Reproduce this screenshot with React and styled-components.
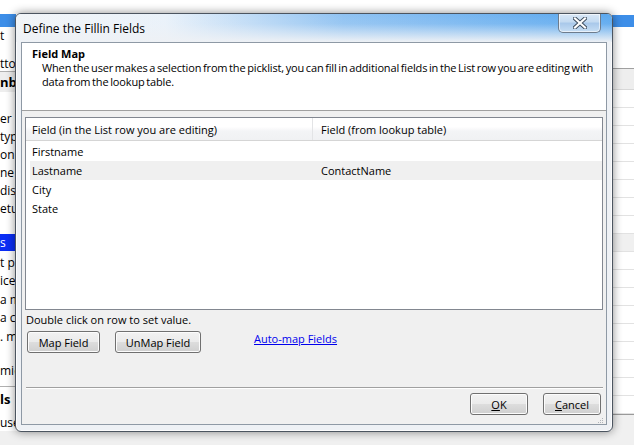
import styled, { createGlobalStyle } from 'styled-components';

const GlobalStyle = createGlobalStyle`
  html, body {
    margin: 0;
    padding: 0;
    background: #ffffff;
  }
  body {
    font-family: "Open Sans", "Noto Sans", "Liberation Sans", sans-serif;
    font-size: 11px;
    color: #000;
  }
`;

const Desktop = styled.div`
  position: relative;
  width: 634px;
  height: 445px;
  overflow: hidden;
  display: grid;
  grid-template-columns: 16px 1fr 22px;
  background: #fff;
`;

/* ---------- app behind the dialog ---------- */

const LeftPane = styled.div`
  display: flex;
  flex-direction: column;
  overflow: hidden;
  background: #fff;
`;

const LeftItem = styled.div`
  height: ${p => p.h}px;
  flex: none;
  display: flex;
  align-items: center;
  white-space: nowrap;
  overflow: hidden;
  font-weight: ${p => (p.bold ? 700 : 400)};
  font-size: ${p => (p.bold ? '13px' : '12px')};
  color: ${p => (p.sel === 'dark' ? '#fff' : '#000')};
  background: ${p =>
    p.sel === 'dark' ? '#0a2df5' : p.sel === 'light' ? '#3d8ee8' : p.shade ? '#eeeeee' : 'transparent'};
  border-top: ${p => (p.rule ? '1px solid #b0b0b0' : 'none')};
`;

const LeftFoot = styled.div`
  flex: 1;
  background: #f0f0f0;
`;

const MidPane = styled.div`
  background: #fff;
  box-shadow: inset 0 -14px 0 #f0f0f0;
`;

const RightPane = styled.div`
  display: flex;
  flex-direction: column;
  background: #fff;
`;

const RightBar = styled.div`
  height: ${p => p.h}px;
  flex: none;
  background: ${p => p.bg || 'transparent'};
  border-top: ${p => (p.top ? `1px solid ${p.top}` : 'none')};
  border-bottom: ${p => (p.bottom ? `1px solid ${p.bottom}` : 'none')};
`;

const RightFoot = styled.div`
  flex: 1;
  background: #f0f0f0;
  border-top: 1px solid #9a9a9a;
`;

/* ---------- dialog ---------- */

const Window = styled.div`
  position: absolute;
  left: 15px;
  top: 13px;
  width: 598px;
  height: 419px;
  box-sizing: border-box;
  border: 1px solid #4c5560;
  border-radius: 6px;
  box-shadow: 0 0 10px rgba(0, 0, 0, 0.45), inset 0 0 0 1px rgba(255, 255, 255, 0.8);
  background: #eef1f5;
  display: flex;
  flex-direction: column;
  padding: 0 5px 6px 5px;
`;

const TitleBar = styled.div`
  height: 28px;
  flex: none;
  display: flex;
  align-items: flex-start;
  justify-content: space-between;
  margin: 0 -5px;
  padding: 0 11px 0 7px;
  border-radius: 5px 5px 0 0;
  background:
    linear-gradient(180deg, rgba(238, 241, 245, 0) 0%, rgba(238, 241, 245, 0.1) 35%, rgba(238, 241, 245, 1) 100%),
    linear-gradient(90deg, #f2f5f8 0%, #eaf2fa 25%, #8fc2f2 55%, #5aa8ef 100%);
`;

const Title = styled.span`
  font-size: 12px;
  line-height: 28px;
  padding-top: 1px;
  color: #000;
`;

const CloseButton = styled.button`
  width: 43px;
  height: 19px;
  margin: 0;
  padding: 0;
  border: 1px solid #6d7c8d;
  border-top: none;
  border-radius: 0 0 5px 5px;
  background: linear-gradient(180deg, #d9e8f7 0%, #c3daf1 45%, #a8c8ea 50%, #c7def4 100%);
  box-shadow: inset 0 0 0 1px rgba(255, 255, 255, 0.6);
  display: flex;
  align-items: center;
  justify-content: center;
`;

const Client = styled.div`
  flex: 1;
  display: flex;
  flex-direction: column;
  background: #f0f0f0;
  border: 1px solid #8e99a5;
`;

const InfoPanel = styled.div`
  height: 68px;
  flex: none;
  box-sizing: border-box;
  background: #fff;
  border-bottom: 1px solid #a0a0a0;
  padding: 4px 10px 0 10px;
`;

const InfoTitle = styled.div`
  font-weight: 700;
  font-size: 11px;
  line-height: 14px;
`;

const InfoText = styled.div`
  padding-left: 10px;
  line-height: 14px;
  white-space: nowrap;
  word-spacing: -1px;
  letter-spacing: -0.15px;
`;

const ListBox = styled.div`
  margin: 6px 3px 0 3px;
  height: 193px;
  flex: none;
  box-sizing: border-box;
  background: #fff;
  border: 1px solid #828790;
  display: flex;
  flex-direction: column;
`;

const HeaderRow = styled.div`
  display: grid;
  grid-template-columns: 287px 1fr;
  height: 22px;
  flex: none;
  background: linear-gradient(180deg, #ffffff 0%, #ffffff 40%, #f3f4f6 60%, #f0f1f3 100%);
  border-bottom: 1px solid #d5d5d5;
`;

const HeaderCell = styled.div`
  display: flex;
  align-items: center;
  padding-left: ${p => (p.first ? 6 : 8)}px;
  border-right: ${p => (p.first ? '1px solid #e3e4e6' : 'none')};
`;

const Rows = styled.div`
  padding: 1px 0 0 4px;
  display: flex;
  flex-direction: column;
`;

const Row = styled.div`
  display: grid;
  grid-template-columns: 283px 1fr;
  height: 19px;
  background: ${p => (p.shaded ? '#f0f0f0' : 'transparent')};
`;

const Cell = styled.div`
  display: flex;
  align-items: center;
  padding-left: ${p => (p.first ? 2 : 8)}px;
`;

const Hint = styled.div`
  padding: 3px 0 0 4px;
  line-height: 14px;
`;

const ActionRow = styled.div`
  display: flex;
  align-items: flex-start;
  gap: 15px;
  padding: 4px 0 0 5px;
`;

const WinButton = styled.button`
  width: ${p => p.w}px;
  height: 22px;
  margin: 0;
  padding: 0;
  font: inherit;
  font-size: 11px;
  color: #000;
  border: 1px solid #707070;
  border-radius: 3px;
  background: linear-gradient(180deg, #f2f2f2 0%, #ebebeb 48%, #dddddd 52%, #cfcfcf 100%);
  box-shadow: inset 0 0 0 1px #fcfcfc;
`;

const LinkText = styled.a`
  margin-left: 38px;
  color: #0000ee;
  text-decoration: underline;
  cursor: pointer;
`;

const Spacer = styled.div`
  flex: 1;
`;

const Separator = styled.div`
  margin: 0 3px 0 4px;
  height: 0;
  border-top: 1px solid #a0a0a0;
  border-bottom: 1px solid #ffffff;
`;

const Footer = styled.div`
  display: flex;
  justify-content: flex-end;
  gap: 15px;
  padding: 4px 5px 9px 0;
`;

const Mnemonic = styled.span`
  text-decoration: underline;
`;

const Grip = styled.svg`
  position: absolute;
  right: 8px;
  bottom: 7px;
`;

const leftItems = [
  { h: 14 },
  { h: 13, sel: 'light' },
  { h: 16, t: 't' },
  { h: 12 },
  { h: 16, t: 'ttor' },
  { h: 20, t: 'nbo', bold: true, shade: true, rule: true },
  { h: 17 },
  { h: 18, t: 'er' },
  { h: 18, t: 'typ' },
  { h: 19, t: 'on s' },
  { h: 17, t: 'ne' },
  { h: 18, t: 'disp' },
  { h: 18, t: 'etu' },
  { h: 17 },
  { h: 17, t: 's', sel: 'dark' },
  { h: 2 },
  { h: 18, t: 't pi' },
  { h: 19, t: 'ice' },
  { h: 18, t: 'a m' },
  { h: 19, t: 'a c' },
  { h: 18, t: '. m' },
  { h: 16 },
  { h: 18, t: 'mic' },
  { h: 7 },
  { h: 24, t: 'ls', bold: true, rule: true },
  { h: 2 },
  { h: 18, t: 'use' },
];

const rows = [
  { a: 'Firstname', b: '' },
  { a: 'Lastname', b: 'ContactName', shaded: true },
  { a: 'City', b: '' },
  { a: 'State', b: '' },
];

export default function App() {
  return (
    <>
      <GlobalStyle />
      <Desktop>
        <LeftPane>
          {leftItems.map((it, i) => (
            <LeftItem key={i} h={it.h} sel={it.sel} bold={it.bold} shade={it.shade} rule={it.rule}>
              {it.t}
            </LeftItem>
          ))}
          <LeftFoot />
        </LeftPane>
        <MidPane />
        <RightPane>
          <RightBar h={15} />
          <RightBar h={12} bg="#3d8ee8" />
          <RightBar h={41} />
          <RightBar h={20} bg="#eeeeee" top="#a0a0a0" bottom="#d8d8d8" />
          {Array.from({ length: 18 }).map((_, i) => (
            <RightBar key={i} h={17} bg={i === 8 ? '#f0f0f0' : '#fff'} bottom="#e2e2e2" />
          ))}
          <RightFoot />
        </RightPane>

        <Window>
          <TitleBar>
            <Title>Define the Fillin Fields</Title>
            <CloseButton aria-label="Close">
              <svg width="14" height="12" viewBox="0 0 14 12">
                <path d="M2 1.5 L12 10.5 M12 1.5 L2 10.5" stroke="#3b4a5c" strokeWidth="4" strokeLinecap="square" />
                <path d="M2 1.5 L12 10.5 M12 1.5 L2 10.5" stroke="#ffffff" strokeWidth="2.2" strokeLinecap="square" />
              </svg>
            </CloseButton>
          </TitleBar>
          <Client>
            <InfoPanel>
              <InfoTitle>Field Map</InfoTitle>
              <InfoText>
                When the user makes a selection from the picklist, you can fill in additional fields in the List row you are editing with
              </InfoText>
              <InfoText>data from the lookup table.</InfoText>
            </InfoPanel>
            <ListBox>
              <HeaderRow>
                <HeaderCell first>Field (in the List row you are editing)</HeaderCell>
                <HeaderCell>Field (from lookup table)</HeaderCell>
              </HeaderRow>
              <Rows>
                {rows.map(r => (
                  <Row key={r.a} shaded={r.shaded}>
                    <Cell first>{r.a}</Cell>
                    <Cell>{r.b}</Cell>
                  </Row>
                ))}
              </Rows>
            </ListBox>
            <Hint>Double click on row to set value.</Hint>
            <ActionRow>
              <WinButton w={73}>Map Field</WinButton>
              <WinButton w={86}>UnMap Field</WinButton>
              <LinkText>Auto-map Fields</LinkText>
            </ActionRow>
            <Spacer />
            <Separator />
            <Footer>
              <WinButton w={58}>
                <Mnemonic>O</Mnemonic>K
              </WinButton>
              <WinButton w={58}>
                <Mnemonic>C</Mnemonic>ancel
              </WinButton>
            </Footer>
          </Client>
          <Grip width="7" height="7" viewBox="0 0 7 7">
            <rect x="5" y="1" width="1" height="1" fill="#b0b4ba" />
            <rect x="3" y="3" width="1" height="1" fill="#b0b4ba" />
            <rect x="5" y="3" width="1" height="1" fill="#b0b4ba" />
            <rect x="1" y="5" width="1" height="1" fill="#b0b4ba" />
            <rect x="3" y="5" width="1" height="1" fill="#b0b4ba" />
            <rect x="5" y="5" width="1" height="1" fill="#b0b4ba" />
          </Grip>
        </Window>
      </Desktop>
    </>
  );
}
